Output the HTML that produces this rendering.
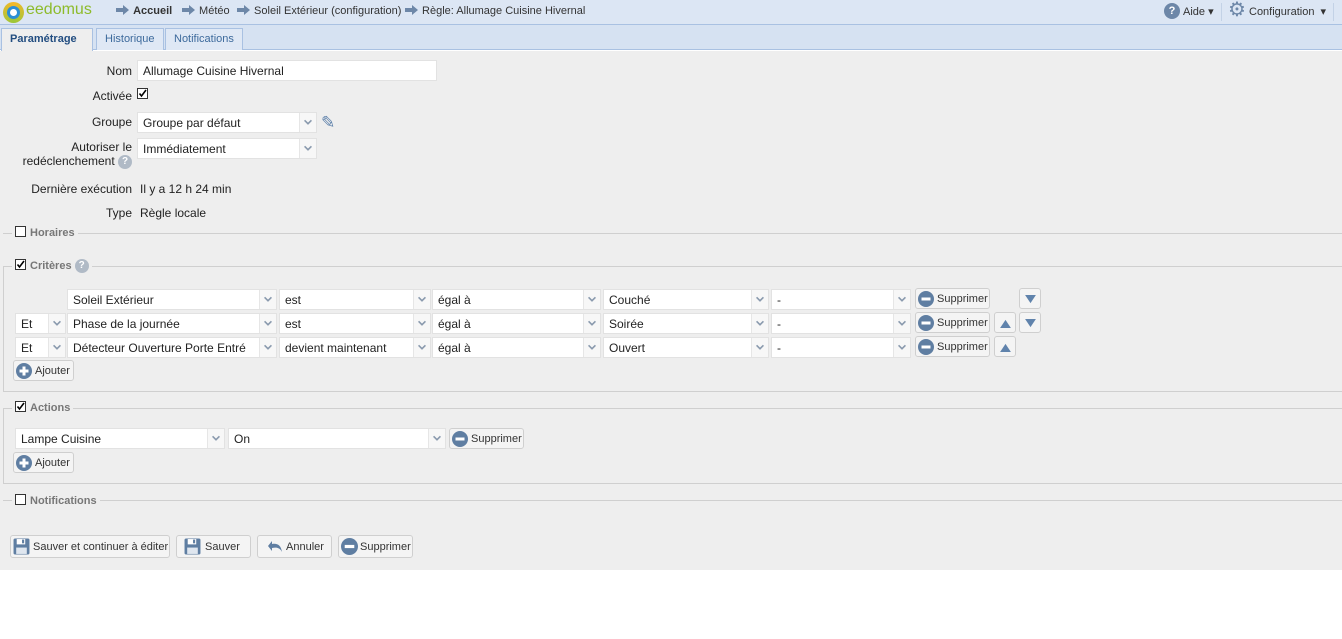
<!DOCTYPE html>
<html><head><meta charset="utf-8"><style>
*{box-sizing:border-box;margin:0;padding:0}
body{width:1342px;height:639px;background:#fff;font-family:"Liberation Sans",sans-serif;font-size:12px;color:#222;position:relative;overflow:hidden}
.a{position:absolute}
#hdr{left:0;top:0;width:1342px;height:25px;background:#dce6f4;border-bottom:1px solid #a9c1e2}
#tabs{left:0;top:25px;width:1342px;height:25px;background:#d6e2f2;border-bottom:1px solid #a9c1e2}
#main{left:0;top:51px;width:1342px;height:519px;background:#eeeeee}
.tab{position:absolute;top:28px;height:22px;border:1px solid #a9c1e2;border-bottom:none;background:#dfe8f5;color:#3d6a9c;font-size:11px;line-height:20px;padding:0 8px}
.tab.on{background:#eeeeee;color:#224d80;font-weight:bold;height:24px;width:92px}
.crumb{position:absolute;top:5px;font-size:11px;color:#333}
.lbl{position:absolute;text-align:right;font-size:12px;color:#222}
.sel{position:absolute;height:21px;background:#fff;border:1px solid #e2e2e2;font-size:12px;line-height:21px;padding-left:5px;white-space:nowrap;overflow:hidden}
.sel:after{content:"";position:absolute;right:0;top:0;width:16px;height:19px;border-left:1px solid #e6e6e6;background:#f7f7f7}
.sel i{position:absolute;right:4px;top:5px;width:8px;height:8px;z-index:2;display:block;line-height:0}
.sel i svg{display:block}
.inp{position:absolute;height:21px;background:#fff;border:1px solid #e2e2e2;font-size:12px;line-height:21px;padding-left:5px}
.btn{position:absolute;height:21px;background:#f4f4f4;border:1px solid #cfcfcf;border-radius:3px;font-size:11px;line-height:20px;color:#333;padding-left:21px;white-space:nowrap}
.btn svg{position:absolute;left:2px;top:2px}
.sm{position:absolute;width:22px;height:21px;background:#f4f4f4;border:1px solid #cfcfcf;border-radius:3px}
.sm svg{position:absolute;left:5px;top:6px}
.fs{position:absolute;border:1px solid #cfcfcf}
.leg{position:absolute;background:#eeeeee;font-weight:bold;font-size:11px;color:#777;padding:0 3px;line-height:14px}
.cb{display:inline-block;width:11px;height:11px;border:1px solid #333;background:#fff;vertical-align:-1px;margin-right:4px;position:relative}
.hl{position:absolute;height:1px;background:#cfcfcf}
.q{display:inline-block;width:14px;height:14px;border-radius:50%;background:#b0bac6;color:#fff;font-size:10px;line-height:14px;text-align:center;font-weight:bold;vertical-align:middle}
</style></head><body>
<svg width="0" height="0" style="position:absolute"><defs>
<symbol id="chev" viewBox="0 0 7 7"><path d="M0.5 2 L3.5 5 L6.5 2" stroke="#8a9aae" stroke-width="1.4" fill="none"/></symbol>
<symbol id="minus" viewBox="0 0 16 16"><circle cx="8" cy="8" r="8" fill="#5f7ea2"/><rect x="3.5" y="6.5" width="9" height="3" fill="#fff"/></symbol>
<symbol id="plus" viewBox="0 0 16 16"><circle cx="8" cy="8" r="8" fill="#5f7ea2"/><rect x="3.5" y="6.5" width="9" height="3" fill="#fff"/><rect x="6.5" y="3.5" width="3" height="9" fill="#fff"/></symbol>
<symbol id="save" viewBox="0 0 16 16"><rect x="0.5" y="0.5" width="15" height="15" rx="1.5" fill="#5f7ea2"/><rect x="3.5" y="1" width="8" height="5" fill="#fff"/><rect x="8.5" y="1.5" width="2" height="3.5" fill="#5f7ea2"/><rect x="3" y="9" width="10" height="6" fill="#dfe6ef"/></symbol>
<symbol id="tri" viewBox="0 0 12 10"><path d="M0 0 H12 L6 9 Z" fill="#6083ac"/></symbol>
<symbol id="arrow" viewBox="0 0 14 10"><path d="M0 3 H7 V0 L13 5 L7 10 V7 H0 Z" fill="#6d87a8"/></symbol>
</defs></svg>

<div id="hdr" class="a"></div>
<div class="a" style="left:3px;top:2px;width:21px;height:21px;border-radius:50%;background:conic-gradient(#f4b82a,#9cc73a,#f4b82a)"></div>
<div class="a" style="left:7px;top:6px;width:13px;height:13px;border-radius:50%;background:#fff;border:3px solid #2b8ed6"></div>
<div class="a" style="left:26px;top:1px;font-size:16px;color:#8dbb2b">eedomus</div>
<div class="crumb" style="left:116px"><svg width="14" height="10" style="vertical-align:-1px"><use href="#arrow"/></svg> <b style="font-size:11px">Accueil</b></div>
<div class="crumb" style="left:182px"><svg width="14" height="10" style="vertical-align:-1px"><use href="#arrow"/></svg> Météo</div>
<div class="crumb" style="left:237px"><svg width="14" height="10" style="vertical-align:-1px"><use href="#arrow"/></svg> Soleil Extérieur (configuration)</div>
<div class="crumb" style="left:405px"><svg width="14" height="10" style="vertical-align:-1px"><use href="#arrow"/></svg> Règle: Allumage Cuisine Hivernal</div>
<div class="a" style="left:1164px;top:3px"><span class="q" style="width:16px;height:16px;line-height:16px;background:#6d87a8;font-size:11px">?</span></div>
<div class="crumb" style="left:1183px">Aide ▾</div>
<div class="a" style="left:1221px;top:3px;width:1px;height:18px;background:#c3d2e6"></div>
<div class="a" style="left:1228px;top:0px;font-size:20px;color:#6d87a8;line-height:20px">⚙</div>
<div class="crumb" style="left:1249px">Configuration &nbsp;▾</div>
<div class="a" style="left:1333px;top:3px;width:1px;height:18px;background:#c3d2e6"></div>

<div id="tabs" class="a"></div>
<div class="tab on" style="left:1px">Paramétrage</div>
<div class="tab" style="left:96px">Historique</div>
<div class="tab" style="left:165px">Notifications</div>

<div id="main" class="a"></div>

<div class="lbl" style="left:0;width:132px;top:64px">Nom</div>
<div class="inp" style="left:137px;top:60px;width:300px">Allumage Cuisine Hivernal</div>
<div class="lbl" style="left:0;width:132px;top:89px">Activée</div>
<div class="a" style="left:137px;top:87px"><span class="cb"><svg class="a" style="left:0;top:0" width="9" height="9"><path d="M1.5 4.5 L3.5 7 L8 1" stroke="#000" stroke-width="1.6" fill="none"/></svg></span></div>
<div class="lbl" style="left:0;width:132px;top:115px">Groupe</div>
<div class="sel" style="left:137px;top:112px;width:180px">Groupe par défaut<i><svg width="8" height="8"><use href="#chev"/></svg></i></div>
<div class="a" style="left:321px;top:113px;font-size:17px;color:#6083ac">✎</div>
<div class="lbl" style="left:0;width:132px;top:140px;line-height:14px">Autoriser le<br>redéclenchement <span class="q">?</span></div>
<div class="sel" style="left:137px;top:138px;width:180px">Immédiatement<i><svg width="8" height="8"><use href="#chev"/></svg></i></div>
<div class="lbl" style="left:0;width:132px;top:182px">Dernière exécution</div>
<div class="a" style="left:140px;top:182px">Il y a 12 h 24 min</div>
<div class="lbl" style="left:0;width:132px;top:206px">Type</div>
<div class="a" style="left:140px;top:206px">Règle locale</div>

<div class="hl" style="left:3px;top:233px;width:1339px"></div>
<div class="leg" style="left:12px;top:226px"><span class="cb"></span>Horaires</div>

<div class="fs" style="left:3px;top:266px;width:1345px;height:126px"></div>
<div class="leg" style="left:12px;top:259px"><span class="cb"><svg class="a" style="left:0;top:0" width="9" height="9"><path d="M1.5 4.5 L3.5 7 L8 1" stroke="#000" stroke-width="1.6" fill="none"/></svg></span>Critères <span class="q">?</span></div>

<div class="sel" style="left:67px;top:289px;width:210px">Soleil Extérieur<i><svg width="8" height="8"><use href="#chev"/></svg></i></div>
<div class="sel" style="left:279px;top:289px;width:152px">est<i><svg width="8" height="8"><use href="#chev"/></svg></i></div>
<div class="sel" style="left:432px;top:289px;width:169px">égal à<i><svg width="8" height="8"><use href="#chev"/></svg></i></div>
<div class="sel" style="left:603px;top:289px;width:166px">Couché<i><svg width="8" height="8"><use href="#chev"/></svg></i></div>
<div class="sel" style="left:771px;top:289px;width:140px">-<i><svg width="8" height="8"><use href="#chev"/></svg></i></div>
<div class="btn" style="left:915px;top:288px;width:75px"><svg width="16" height="16"><use href="#minus"/></svg>Supprimer</div>
<div class="sm" style="left:1019px;top:288px"><svg width="11" height="9"><use href="#tri"/></svg></div>

<div class="sel" style="left:15px;top:313px;width:51px">Et<i><svg width="8" height="8"><use href="#chev"/></svg></i></div>
<div class="sel" style="left:67px;top:313px;width:210px">Phase de la journée<i><svg width="8" height="8"><use href="#chev"/></svg></i></div>
<div class="sel" style="left:279px;top:313px;width:152px">est<i><svg width="8" height="8"><use href="#chev"/></svg></i></div>
<div class="sel" style="left:432px;top:313px;width:169px">égal à<i><svg width="8" height="8"><use href="#chev"/></svg></i></div>
<div class="sel" style="left:603px;top:313px;width:166px">Soirée<i><svg width="8" height="8"><use href="#chev"/></svg></i></div>
<div class="sel" style="left:771px;top:313px;width:140px">-<i><svg width="8" height="8"><use href="#chev"/></svg></i></div>
<div class="btn" style="left:915px;top:312px;width:75px"><svg width="16" height="16"><use href="#minus"/></svg>Supprimer</div>
<div class="sm" style="left:994px;top:312px"><svg width="11" height="9" style="transform:rotate(180deg)"><use href="#tri"/></svg></div>
<div class="sm" style="left:1019px;top:312px"><svg width="11" height="9"><use href="#tri"/></svg></div>

<div class="sel" style="left:15px;top:337px;width:51px">Et<i><svg width="8" height="8"><use href="#chev"/></svg></i></div>
<div class="sel" style="left:67px;top:337px;width:210px">Détecteur Ouverture Porte Entré<i><svg width="8" height="8"><use href="#chev"/></svg></i></div>
<div class="sel" style="left:279px;top:337px;width:152px">devient maintenant<i><svg width="8" height="8"><use href="#chev"/></svg></i></div>
<div class="sel" style="left:432px;top:337px;width:169px">égal à<i><svg width="8" height="8"><use href="#chev"/></svg></i></div>
<div class="sel" style="left:603px;top:337px;width:166px">Ouvert<i><svg width="8" height="8"><use href="#chev"/></svg></i></div>
<div class="sel" style="left:771px;top:337px;width:140px">-<i><svg width="8" height="8"><use href="#chev"/></svg></i></div>
<div class="btn" style="left:915px;top:336px;width:75px"><svg width="16" height="16"><use href="#minus"/></svg>Supprimer</div>
<div class="sm" style="left:994px;top:336px"><svg width="11" height="9" style="transform:rotate(180deg)"><use href="#tri"/></svg></div>

<div class="btn" style="left:13px;top:360px;width:61px"><svg width="16" height="16"><use href="#plus"/></svg>Ajouter</div>

<div class="fs" style="left:3px;top:408px;width:1345px;height:76px"></div>
<div class="leg" style="left:12px;top:401px"><span class="cb"><svg class="a" style="left:0;top:0" width="9" height="9"><path d="M1.5 4.5 L3.5 7 L8 1" stroke="#000" stroke-width="1.6" fill="none"/></svg></span>Actions</div>
<div class="sel" style="left:15px;top:428px;width:210px">Lampe Cuisine<i><svg width="8" height="8"><use href="#chev"/></svg></i></div>
<div class="sel" style="left:228px;top:428px;width:218px">On<i><svg width="8" height="8"><use href="#chev"/></svg></i></div>
<div class="btn" style="left:449px;top:428px;width:75px"><svg width="16" height="16"><use href="#minus"/></svg>Supprimer</div>
<div class="btn" style="left:13px;top:452px;width:61px"><svg width="16" height="16"><use href="#plus"/></svg>Ajouter</div>

<div class="hl" style="left:3px;top:500px;width:1339px"></div>
<div class="leg" style="left:12px;top:494px"><span class="cb"></span>Notifications</div>

<div class="btn" style="left:10px;top:535px;width:160px;height:23px;line-height:23px;padding-left:22px"><svg width="17" height="17" style="top:2px"><use href="#save"/></svg>Sauver et continuer à éditer</div>
<div class="btn" style="left:176px;top:535px;width:75px;height:23px;line-height:23px;padding-left:28px"><svg width="17" height="17" style="left:7px;top:2px"><use href="#save"/></svg>Sauver</div>
<div class="btn" style="left:257px;top:535px;width:75px;height:23px;line-height:23px;padding-left:28px"><svg width="18" height="14" style="left:8px;top:3px" viewBox="0 0 18 14"><path d="M2 7 L6 2 V5 C11 4 15 6 16 13 C14 9 11 8 6 9 V12 Z" fill="#5f7ea2"/></svg>Annuler</div>
<div class="btn" style="left:338px;top:535px;width:75px;height:23px;line-height:23px"><svg width="17" height="17" style="top:2px"><use href="#minus"/></svg>Supprimer</div>
</body></html>
